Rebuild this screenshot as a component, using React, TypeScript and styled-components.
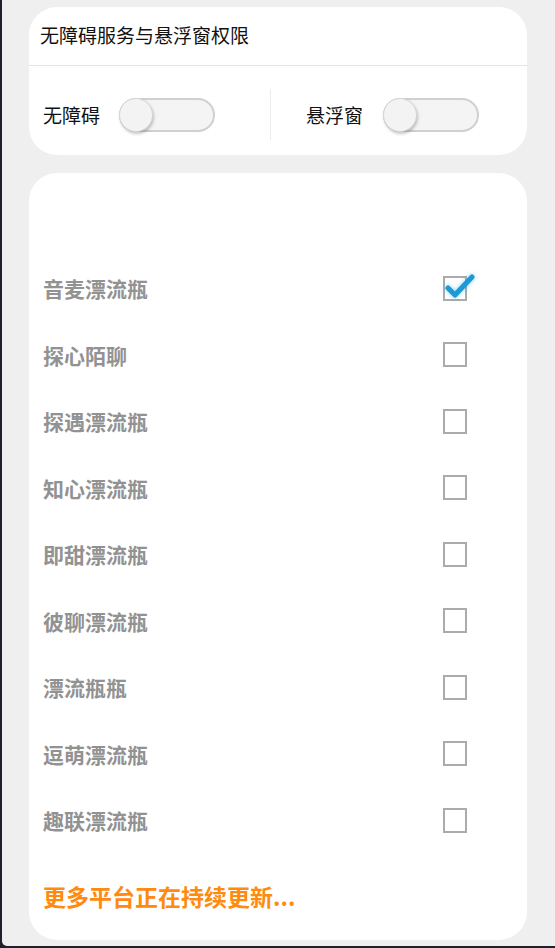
import * as React from "react";
import styled, { createGlobalStyle } from "styled-components";

const GlobalStyle = createGlobalStyle`
    html, body {
        margin: 0;
        padding: 0;
        background: #20202a;
    }
    body {
        font-family: "Noto Sans CJK SC", "Noto Sans", sans-serif;
    }
`;

// frame
const Screen = styled.div`
    margin-left: 2px;
    height: 946px;
    box-sizing: border-box;
    padding: 7px 28px 0 27px;
    background: #efefef;
    border-bottom-left-radius: 5px;
    display: flex;
    flex-direction: column;
    gap: 18px;
`;

const Card = styled.div`
    background: #ffffff;
    border-radius: 28px;
`;

// permission card
const CardTitle = styled.div`
    height: 59px;
    box-sizing: border-box;
    padding: 0 0 3px 11px;
    display: flex;
    align-items: center;
    font-size: 19px;
    color: #111;
    border-bottom: 1px solid #e4e4e4;
`;

const SwitchRow = styled.div`
    height: 89px;
    box-sizing: border-box;
    padding-top: 8px;
    display: grid;
    grid-template-columns: 241px 1px 1fr;
    align-items: center;
`;

const SwitchCell = styled.div<{ $pad: number; $gap: number }>`
    display: flex;
    align-items: center;
    padding-left: ${(p) => p.$pad}px;
    gap: ${(p) => p.$gap}px;
    font-size: 19px;
    color: #111;
`;

const VDivider = styled.div`
    height: 51px;
    background: #ececec;
`;

const Track = styled.div`
    position: relative;
    width: 96px;
    height: 34px;
    box-sizing: border-box;
    border: 2px solid #d0d0d0;
    border-radius: 17px;
    background: #f4f4f4;
`;

const Knob = styled.div`
    position: absolute;
    left: -2px;
    top: -2px;
    width: 34px;
    height: 34px;
    box-sizing: border-box;
    border-radius: 50%;
    border: 1px solid #d6d6d6;
    background: #f3f3f3;
    box-shadow: 1px 2px 3px rgba(0, 0, 0, 0.22);
`;

// platform list
const ListCard = styled(Card)`
    padding: 82px 0 0 14px;
    height: 767px;
    box-sizing: border-box;
`;

const Row = styled.div`
    height: 66.5px;
    display: flex;
    align-items: center;
    justify-content: space-between;
    padding-right: 60px;
`;

const RowLabel = styled.span`
    font-size: 21px;
    font-weight: 700;
    color: #929292;
`;

const Box = styled.div`
    position: relative;
    width: 24px;
    height: 25px;
    box-sizing: border-box;
    border: 2px solid #ababab;
    background: #fff;
`;

const Tick = styled.svg`
    position: absolute;
    left: 0px;
    top: -5px;
    width: 30px;
    height: 26px;
    overflow: visible;
    filter: drop-shadow(0 0 2px rgba(40, 160, 230, 0.55));
`;

const Footer = styled.div`
    margin-top: 25px;
    font-size: 23px;
    font-weight: 700;
    color: #ff8a0d;
`;

const platforms = [
    { name: "音麦漂流瓶", checked: true },
    { name: "探心陌聊", checked: false },
    { name: "探遇漂流瓶", checked: false },
    { name: "知心漂流瓶", checked: false },
    { name: "即甜漂流瓶", checked: false },
    { name: "彼聊漂流瓶", checked: false },
    { name: "漂流瓶瓶", checked: false },
    { name: "逗萌漂流瓶", checked: false },
    { name: "趣联漂流瓶", checked: false },
];

const Switch = () => (
    <Track>
        <Knob />
    </Track>
);

const App = () => {
    return (
        <>
            <GlobalStyle />
            <Screen>
                <Card>
                    <CardTitle>无障碍服务与悬浮窗权限</CardTitle>
                    <SwitchRow>
                        <SwitchCell $pad={14} $gap={19}>
                            无障碍
                            <Switch />
                        </SwitchCell>
                        <VDivider />
                        <SwitchCell $pad={35} $gap={20}>
                            悬浮窗
                            <Switch />
                        </SwitchCell>
                    </SwitchRow>
                </Card>
                <ListCard>
                    {platforms.map((p) => (
                        <Row key={p.name}>
                            <RowLabel>{p.name}</RowLabel>
                            <Box>
                                {p.checked && (
                                    <Tick viewBox="0 0 30 26">
                                        <path
                                            d="M3 15 L10 22 L27 4"
                                            fill="none"
                                            stroke="#1b9ad6"
                                            strokeWidth="5"
                                            strokeLinecap="round"
                                            strokeLinejoin="round"
                                        />
                                    </Tick>
                                )}
                            </Box>
                        </Row>
                    ))}
                    <Footer>更多平台正在持续更新...</Footer>
                </ListCard>
            </Screen>
        </>
    );
};

export default App;
